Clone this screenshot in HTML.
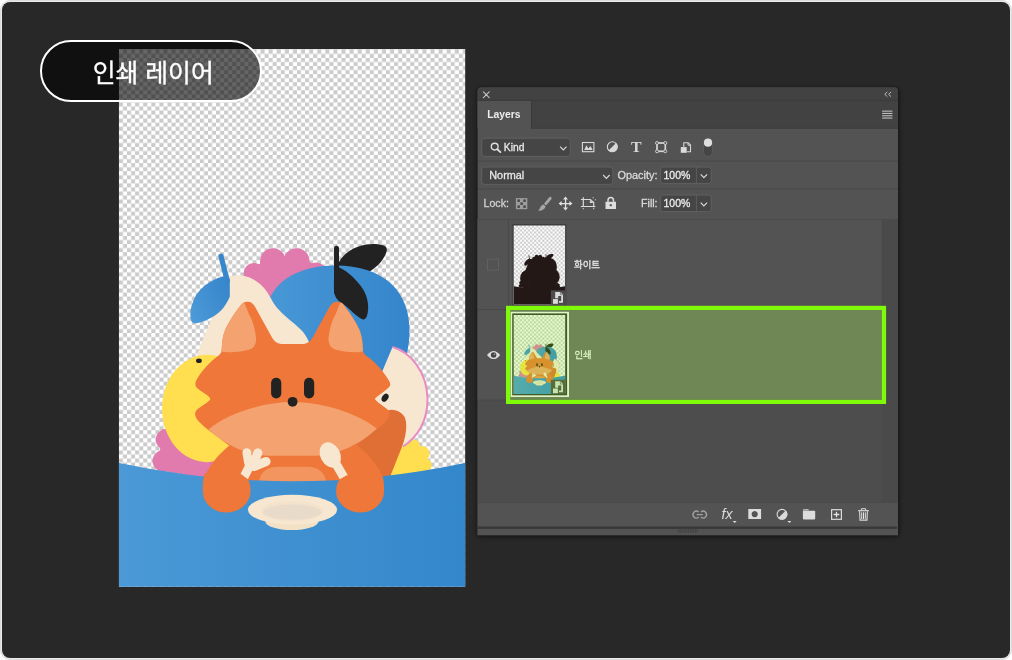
<!DOCTYPE html>
<html lang="ko">
<head>
<meta charset="utf-8">
<title>인쇄 레이어</title>
<style>
*{box-sizing:border-box;margin:0;padding:0}
html,body{width:1012px;height:660px;background:#fff;overflow:hidden}
body{position:relative;font-family:"Liberation Sans","Noto Sans CJK KR",sans-serif;}
#frame{position:absolute;left:0;top:0;width:1012px;height:660px;border-radius:10px;background:#ebebeb;border:1px solid #dcdcdc}
#stage{position:absolute;left:2px;top:2px;width:1008px;height:655.6px;border-radius:8px;background:#282828}
#art{position:absolute;left:118px;top:48px;width:348px;height:540px}
#pill{position:absolute;left:40px;top:40px;width:221.5px;height:61.5px;border-radius:31px;border:2px solid #fff;background:rgba(0,0,0,.6);color:#fff;font-size:24.8px;font-weight:400;-webkit-text-stroke:0.35px #fff;line-height:64px;text-align:center;padding-left:5px;will-change:transform;font-family:"Liberation Sans","Noto Sans CJK KR",sans-serif}
#panel{position:absolute;left:470px;top:80px;width:440px;height:465px;will-change:transform}
</style>
</head>
<body>
<div id="frame"></div>
<div id="stage"></div>
<!--ART-->
<svg id="art" viewBox="118 48 348 540">
<defs>
<linearGradient id="gb" gradientUnits="userSpaceOnUse" x1="119" y1="0" x2="465" y2="0"><stop offset="0" stop-color="#4b99d6"/><stop offset="1" stop-color="#3387cb"/></linearGradient>
<linearGradient id="gp" gradientUnits="userSpaceOnUse" x1="270" y1="0" x2="410" y2="0"><stop offset="0" stop-color="#4897d5"/><stop offset="1" stop-color="#3485cc"/></linearGradient>
<linearGradient id="gl" gradientUnits="userSpaceOnUse" x1="190" y1="310" x2="230" y2="290"><stop offset="0" stop-color="#4b99d6"/><stop offset="1" stop-color="#3886cc"/></linearGradient>
<pattern id="cv" x="118.95" y="41.758" width="8.092" height="8.092" patternUnits="userSpaceOnUse"><rect width="8.092" height="8.092" fill="#fff"/><rect x="4.046" width="4.046" height="4.046" fill="#cbcbcb"/><rect y="4.046" width="4.046" height="4.046" fill="#cbcbcb"/></pattern>
<pattern id="cv2" x="118.95" y="49.15" width="8.092" height="8.092" patternUnits="userSpaceOnUse"><rect width="8.092" height="8.092" fill="#fff"/><rect x="4.046" width="4.046" height="4.046" fill="#cbcbcb"/><rect y="4.046" width="4.046" height="4.046" fill="#cbcbcb"/></pattern>
<clipPath id="cvc"><rect x="118.95" y="49.15" width="346.23" height="537.65"/></clipPath>
<g id="artg">
<!-- pink cloud top -->
<g fill="#e17aad">
<circle cx="254" cy="273.5" r="10.5"/><circle cx="272.9" cy="261.2" r="12.9"/><circle cx="296.6" cy="261.3" r="13"/><circle cx="316" cy="273" r="10.5"/>
<path d="M245 277 L262 262 L284.7 256.5 L310 262 L326 275 L300 310 L265 310Z"/>
</g>
<!-- upper black leaf -->
<path fill="#222" d="M338 264 C344 251 359 243.5 375 244 C384 244.3 388.5 246.5 386.3 252.5 C383 261 376 268.5 366 273.5 L338 272Z"/>
<!-- plum -->
<path fill="url(#gp)" d="M266 335 C258 283 298 265.5 335 265.5 C385 265.5 409.5 292 409.5 330 C409.5 345 407 358 400 372 L300 380 L266 380Z"/>
<!-- pear -->
<path fill="#f7e6d0" d="M227 279 C232 274 243 274 252.7 279 C262 284 267 291 271 298.6 C277 311 288 318 298 327 C304 332 308 338 310 346 L310 380 L195 380 L197.5 353.7 C199.5 347 205.5 333 210.5 321.5 L227 292Z"/>
<!-- pear leaf -->
<path stroke="#3886cc" stroke-width="5.2" stroke-linecap="round" fill="none" d="M221 256.2 L227.3 281"/>
<path fill="url(#gl)" d="M223.2 276.6 C219 277.5 216 278.8 214.2 279.8 C209 282.5 204.5 285.5 201.3 288.8 C197.5 292.5 194.8 297 193 301.7 C191 306.5 190.2 311 190.4 314.6 C190.5 318 190.6 320 191.7 321.4 C193 323.2 195 323.5 197.5 323 C203 322 209 319 214.2 315.9 C219 313 223 309 225.8 304.3 C228 300.5 229.5 298 229.8 296.5 L229.8 279 L227 276.5Z"/>
<!-- black stem and lower leaf -->
<path stroke="#222" stroke-width="5" stroke-linecap="round" fill="none" d="M336.5 248.3 L336.5 292"/>
<path fill="#222" d="M339.3 267.5 C348 271.3 358 281 363.5 290 C368 298 368.9 306 367.7 313 C366.8 318 365 320.2 362.5 319.3 C358 317.5 352 311.5 347 307 C343 303.5 338.5 301.8 336 297.8 C334 294.5 333.9 290 333.9 285 L334.2 267Z"/>
<!-- pink cloud bottom left -->
<g fill="#e17aad"><circle cx="166.5" cy="439.5" r="10.7"/><circle cx="163.2" cy="461" r="10.7"/><path d="M162 430 L215 430 L215 480 L158 470Z"/></g>
<!-- yellow cloud bottom right -->
<g fill="#ffde50"><circle cx="413.6" cy="445.9" r="6.5"/><circle cx="421.8" cy="453.7" r="7.7"/><circle cx="424.9" cy="465.2" r="6.8"/><path d="M385 445 L407 443.5 L413.6 446 L421.8 453.7 L424.9 465.2 L427 480 L380 480Z"/></g>
<!-- cream bird right -->
<path fill="#f7e6d0" d="M392.5 347 C411 352 426.5 372 427.5 398 C428 420 418 437 403 446.5 L378 450 L372 399 L382 372Z"/>
<path fill="none" stroke="#e88cc4" stroke-width="2" d="M392.5 347 C411 352 426.5 372 427.5 398 C428 420 418 437 403 446.5"/>
<ellipse cx="385.1" cy="397.7" rx="3" ry="4.5" transform="rotate(32 385.1 397.7)" fill="#222"/>
<!-- yellow chick -->
<ellipse cx="207" cy="408.5" rx="45" ry="53.7" fill="#ffde50"/>
<ellipse cx="198.9" cy="360.8" rx="2.9" ry="2.3" fill="#222"/>
<!-- tail -->
<path fill="#df6f35" d="M385 412 C390 408 399 409.5 404 416 C408 422 406.5 436 401.5 448 L390 477 L345 477 L355 440Z"/>
<!-- fox body -->
<path fill="#ee7739" d="M229.4 445.5 C217.5 455 207.5 467.5 203.2 481 L202.6 495 L384.2 495 L383.6 480 C380.6 468.5 370.9 456.4 356.4 444.2 L330 436 L250 436Z"/>
<!-- fox head -->
<path id="head" fill="#ee7739" d="M292.3 343.9 L281.5 343.9 Q275.5 343.9 272 337.4 L254.6 305.9 Q251.5 301.2 247 301.7 Q243 302 240.5 305.5 Q230 319 225.2 329.8 Q222 337.5 221.6 350.5 Q221.3 353.8 217 356.8 C209 362.5 201 372 196.8 379.5 C194.3 384 195.2 386.5 198.3 389.1 C201.5 391.5 206.5 394.5 208.8 396.8 C210.6 398.6 210.6 399.2 208.8 400.9 C206 403.5 201.5 406 198.3 408.5 C194.8 411.5 194.2 414 196.2 418 C198.5 422 203 425.5 208 429.7 L228.7 445.2 L292.3 460 L355.9 445.2 L376.6 429.7 C381.6 425.5 386.1 422 388.4 418 C390.4 414 389.8 411.5 386.3 408.5 C383.5 406.3 379 403.3 376.3 400.8 C374.7 399.3 374.7 398.5 376.3 397.3 C380 394.4 384.8 391 388.2 388 C390.8 385.6 390.8 383.6 388.8 380.4 C384.2 372.6 376 362.5 367.6 356.8 Q363.3 353.8 363 350.5 Q362.6 337.5 359.4 329.8 Q354.6 319 344.1 305.5 Q341.6 302 337.6 301.7 Q333.1 301.2 330 305.9 L312.6 337.4 Q309.1 343.9 303.1 343.9 L292.3 343.9 Z"/>
<!-- inner ears -->
<path fill="#f4a270" d="M244.2 302.6 Q242 302.8 240.5 305.5 Q230 319 225.2 329.8 Q222 337.5 221.6 350.5 Q221.5 351.5 222.5 351.7 Q237 353.5 249 349.8 Q256.5 347 256.2 338.5 Q254 322 249.1 314.6 Q246.5 308 244.2 302.6Z"/>
<path fill="#f4a270" d="M340.4 302.6 Q342.6 302.8 344.1 305.5 Q354.6 319 359.4 329.8 Q362.6 337.5 363 350.5 Q363.1 351.5 362.1 351.7 Q347.6 353.5 335.6 349.8 Q328.1 347 328.4 338.5 Q330.6 322 335.5 314.6 Q338.1 308 340.4 302.6Z"/>
<!-- muzzle -->
<path fill="#f4a270" d="M208.5 429.4 C226 414 262 402 292.3 402 C323 402 359 414 376.8 428.6 C361 444 336 455.8 316 455.8 L268 455.8 C249 455.8 225 445 208.5 429.4Z"/>
<!-- belly -->
<path fill="#f2955f" d="M258.5 484 C259.5 472 267 466.7 278 466.7 L307 466.7 C318 466.7 325.5 472 326.5 484Z"/>
<!-- face -->
<rect x="271.1" y="377.7" width="10.2" height="20.7" rx="5.1" fill="#222"/>
<rect x="304" y="377.7" width="10.2" height="20.7" rx="5.1" fill="#222"/>
<circle cx="292.6" cy="401.8" r="4.9" fill="#222"/>
<!-- fork -->
<g stroke="#f7e6d0" stroke-linecap="round" fill="none">
<path stroke-width="8.8" d="M248.6 463 L246.8 452.7"/>
<path stroke-width="9" d="M253 464.5 L257.9 452.8"/>
<path stroke-width="9.2" d="M254 466.6 L266 461.6"/>
<path stroke-width="9" stroke-linecap="butt" d="M251.3 462.5 L242 481"/>
</g>
<!-- spoon -->
<ellipse cx="330.3" cy="455" rx="10" ry="13.2" transform="rotate(-27 330.3 455)" fill="#f7e6d0"/>
<path stroke="#f7e6d0" stroke-width="9" fill="none" d="M335 462 L346 481"/>
<!-- table -->
<path fill="url(#gb)" d="M118 462.7 Q292 499.8 466 462.7 L466 588 L118 588Z"/>
<!-- paws -->
<path fill="#ee7739" d="M248.2 479.4 L240.9 473.9 L204.5 473.5 C202.4 481 202.3 492 203.6 497 C206.5 506 215.5 512.6 226.6 512.6 C237.6 512.6 247 505.5 249.8 496.5 C251 491.5 250.9 484.5 248.2 479.4Z"/>
<path fill="#ee7739" d="M339.4 479.4 L346.7 475.2 L382 474 C384.4 481 384.6 492 383.2 497 C380.3 506 371.2 512.6 360.1 512.6 C349.1 512.6 339.7 505.5 336.8 496.5 C335.5 491.5 335.9 484.5 339.4 479.4Z"/>
<!-- plate -->
<ellipse cx="291.9" cy="521.5" rx="26.5" ry="8.6" fill="#f3e1c6"/>
<ellipse cx="292.5" cy="509.7" rx="44.6" ry="14.9" fill="#f7e6d0"/>
<ellipse cx="292.1" cy="511.1" rx="31" ry="10.1" fill="#f3e2cc"/>
<ellipse cx="292.4" cy="512.1" rx="29" ry="7.6" fill="#e9dbc9"/>
</g>
</defs>
<rect x="118.95" y="49.15" width="346.23" height="537.65" fill="url(#cv)"/>
<rect x="118.95" y="49.15" width="346.23" height="0.75" fill="url(#cv2)"/>
<g clip-path="url(#cvc)"><use href="#artg"/></g>
</svg>
<!--/ART-->
<div id="pill">인쇄 레이어</div>
<!--PANEL-->
<svg id="panel" viewBox="470 80 440 465" font-family="'Liberation Sans','Noto Sans CJK KR',sans-serif">
<defs>
<filter id="psh" x="-5%" y="-5%" width="110%" height="110%"><feGaussianBlur stdDeviation="2.2"/></filter>
<filter id="sil" color-interpolation-filters="sRGB"><feColorMatrix type="matrix" values="0 0 0 0 0.137  0 0 0 0 0.094  0 0 0 0 0.082  0 0 0 1 0"/></filter>
<pattern id="chk" x="513.75" y="225.4" width="4.08" height="4.08" patternUnits="userSpaceOnUse"><rect width="4.08" height="4.08" fill="#fff"/><rect width="2.04" height="2.04" x="2.04" fill="#cbcbcb"/><rect width="2.04" height="2.04" y="2.04" fill="#cbcbcb"/></pattern>
<clipPath id="pc"><path d="M477.6 91.5 a4 4 0 0 1 4 -4 h412.4 a4 4 0 0 1 4 4 V535.3 H477.6Z"/></clipPath>
<clipPath id="t1"><rect x="513.7" y="225.5" width="51.4" height="78.8"/></clipPath>
<clipPath id="t2"><rect x="513.7" y="315" width="51.5" height="78.9"/></clipPath>
<g id="so">
<rect x="0" y="0" width="14.4" height="14.5" fill="#4c4c4c"/>
<path fill="#dcdcdc" d="M4.3 1.5 H9.5 L12.1 4.2 V12.4 H8.1 V10.6 H10.3 V5.7 H7.3 V7.9 H4.3Z"/>
<path fill="none" stroke="#4c4c4c" stroke-width="0.6" d="M9.5 1.6 V4.3 H12"/>
<rect x="2.1" y="8.7" width="4.9" height="4.7" fill="#dcdcdc"/>
</g>
</defs>
<!-- shadow -->
<rect x="477" y="88" width="422" height="449" rx="4" fill="#000" opacity=".55" filter="url(#psh)"/>
<g clip-path="url(#pc)">
<rect x="477" y="87" width="421" height="449" fill="#535353"/>
<!-- title bar + tab bar -->
<rect x="477" y="87" width="421" height="41.5" fill="#424242"/>

<rect x="477" y="100.7" width="54.1" height="28.3" fill="#535353"/>
<rect x="477" y="99.7" width="421" height="1" fill="#3a3a3a"/>
<rect x="531" y="100.7" width="0.9" height="27.9" fill="#393939"/>
<rect x="531.1" y="127.8" width="367" height="0.9" fill="#3c3c3c"/>
<!-- row separators -->
<rect x="478" y="160.6" width="420" height="1" fill="#484848"/>
<rect x="478" y="188.4" width="420" height="1" fill="#484848"/>
<!-- list area -->
<rect x="477" y="219" width="420" height="283.5" fill="#4d4d4d"/>
<rect x="477" y="219" width="404.4" height="181" fill="#535353"/>
<rect x="478" y="219" width="420" height="0.8" fill="#4a4a4a"/>
<rect x="882.4" y="219.4" width="15.6" height="283.1" fill="#4a4a4a"/>
<rect x="507.9" y="219.6" width="0.9" height="180.4" fill="#474747"/>
<rect x="478" y="309.2" width="404.4" height="0.9" fill="#474747"/>
<rect x="478" y="399.6" width="404.4" height="0.8" fill="#474747"/>
<!-- bottom toolbar -->
<rect x="477" y="502.5" width="420" height="33" fill="#535353"/>
<rect x="478" y="502.2" width="420" height="0.8" fill="#484848"/>
<rect x="477" y="526.5" width="420" height="2.4" fill="#383838"/>
</g>
<!--P2-->
<!-- title icons -->
<g stroke="#d2d2d2" stroke-width="1.15" fill="none" stroke-linecap="round">
<path d="M483.4 91.8 L489.2 97.6 M489.2 91.8 L483.4 97.6" stroke="#c4c4c4" stroke-width="1.05"/>
<path d="M887 92.2 L884.8 94.3 L887 96.4 M890.8 92.2 L888.6 94.3 L890.8 96.4" stroke-width="1" stroke="#bcbcbc"/>
</g>
<g fill="#bdbdbd"><rect x="882.1" y="110.6" width="10.3" height="1.1"/><rect x="882.1" y="112.9" width="10.3" height="1.1"/><rect x="882.1" y="115.2" width="10.3" height="1.1"/><rect x="882.1" y="117.5" width="10.3" height="1.1"/></g>
<text x="487.2" y="118.1" font-size="11.3" font-weight="700" fill="#ededed" textLength="33.4" lengthAdjust="spacingAndGlyphs">Layers</text>
<!-- filter row -->
<rect x="481.7" y="138.2" width="88.6" height="18.2" rx="3" fill="#454545" stroke="#606060" stroke-width="1"/>
<g stroke="#dedede" fill="none"><circle cx="494.7" cy="146.6" r="3.4" stroke-width="1.35"/><path d="M497.3 149.3 L500.4 152.1" stroke-width="1.9" stroke-linecap="round"/></g>
<text stroke="#e9e9e9" stroke-width="0.28" x="503.8" y="150.9" font-size="10.7" fill="#e9e9e9" textLength="20.6" lengthAdjust="spacingAndGlyphs">Kind</text>
<path d="M560.1 146.6 L563.3 149.9 L566.5 146.6" stroke="#d8d8d8" stroke-width="1.2" fill="none"/>
<!-- image icon -->
<rect x="582.4" y="142.5" width="11.5" height="9.2" fill="none" stroke="#d9d9d9" stroke-width="1.1"/>
<path d="M584.2 149.9 L586.4 145.3 L588.3 148.6 L590.5 146 L592.7 149.9Z" fill="#d9d9d9"/>
<!-- half circle -->
<circle cx="612.3" cy="146.8" r="5" fill="none" stroke="#d9d9d9" stroke-width="1.1"/>
<path d="M616.1 143 A5.4 5.4 0 0 1 608.5 150.6Z" fill="#d9d9d9"/>
<!-- T -->
<text x="631.1" y="152.2" font-family="'Liberation Serif',serif" font-weight="700" font-size="14.9" fill="#d8d8d8" textLength="10.6" lengthAdjust="spacingAndGlyphs">T</text>
<!-- shape -->
<g fill="none" stroke="#d6d6d6"><rect x="657" y="143" width="8.3" height="8.3" stroke-width="1.7"/><g stroke-width="0.9" fill="#535353"><circle cx="657" cy="143" r="1.5"/><circle cx="665.3" cy="143" r="1.5"/><circle cx="657" cy="151.3" r="1.5"/><circle cx="665.3" cy="151.3" r="1.5"/></g></g>
<!-- smart object filter -->
<path d="M683.8 147 V142.7 H688.3 L690.5 145 V151.8 H687" fill="none" stroke="#d6d6d6" stroke-width="1.1"/>
<path d="M688 142.7 V145.3 H690.5" fill="none" stroke="#d6d6d6" stroke-width="0.9"/>
<rect x="680.8" y="147.1" width="5.9" height="5.7" fill="#dcdcdc"/>
<!-- toggle -->
<rect x="703.6" y="138.6" width="8.8" height="17.8" rx="4.4" fill="#454545" stroke="#5e5e5e" stroke-width="0.8"/>
<circle cx="708" cy="142.7" r="4.1" fill="#dedede"/>
<!-- blend row -->
<rect x="481.7" y="167" width="131.2" height="17.4" rx="3" fill="#454545" stroke="#606060" stroke-width="1"/>
<text stroke="#e9e9e9" stroke-width="0.28" x="489.3" y="179" font-size="10.4" fill="#e9e9e9" textLength="34.9" lengthAdjust="spacingAndGlyphs">Normal</text>
<path d="M603.2 175 L606.4 178.3 L609.6 175" stroke="#d8d8d8" stroke-width="1.2" fill="none"/>
<text stroke="#dadada" stroke-width="0.28" x="617.5" y="179" font-size="10.4" fill="#dadada" textLength="40" lengthAdjust="spacingAndGlyphs">Opacity:</text>
<rect x="660.6" y="167" width="50.6" height="16.4" rx="2.5" fill="#454545" stroke="#606060" stroke-width="1"/>
<rect x="695.9" y="167" width="0.9" height="16.4" fill="#606060"/>
<text stroke="#ededed" stroke-width="0.28" x="663.5" y="179" font-size="10.4" fill="#ededed" textLength="26.8" lengthAdjust="spacingAndGlyphs">100%</text>
<path d="M700.7 174.4 L703.9 177.7 L707.1 174.4" stroke="#d8d8d8" stroke-width="1.2" fill="none"/>
<!-- lock row -->
<text stroke="#d2d2d2" stroke-width="0.28" x="483.5" y="207.4" font-size="10.4" fill="#d2d2d2" textLength="25.4" lengthAdjust="spacingAndGlyphs">Lock:</text>
<g><rect x="515.9" y="198.1" width="11.4" height="11.1" fill="#9d9d9d"/><g fill="#474747"><rect x="517.4" y="199.4" width="2.5" height="2.5"/><rect x="523.3" y="199.4" width="2.5" height="2.5"/><rect x="520.4" y="202.4" width="2.5" height="2.5"/><rect x="517.4" y="205.4" width="2.5" height="2.5"/><rect x="523.3" y="205.4" width="2.5" height="2.5"/></g></g>
<path d="M550.9 197 C551.9 197.6 551.8 198.6 551.2 199.5 L546 205.4 L544 203.8 L549 197.5 C549.6 196.8 550.3 196.7 550.9 197Z M543.4 204.4 L545.5 206.2 C545.3 208.6 542.5 210.9 538.1 210.7 C540.1 209.3 539.8 205.6 543.4 204.4Z" fill="#a6a6a6"/>
<g fill="#e2e2e2"><rect x="564.9" y="198" width="1.3" height="11.2"/><rect x="559.9" y="203" width="11.2" height="1.3"/><path d="M565.5 196.6 L568 199.6 H563Z M565.5 210.6 L568 207.6 H563Z M558.6 203.6 L561.6 201.1 V206.1Z M572.4 203.6 L569.4 201.1 V206.1Z"/></g>
<g fill="none" stroke="#dadada" stroke-width="1.2"><path d="M583.3 197.2 V206.5 M580.9 206.5 H595.4 M580.9 199.5 H590.4 L593.7 202.6 V207.2"/></g>
<path d="M589.9 199.9 V203.1 H593.4Z" fill="#dadada"/>
<g fill="#c4c4c4"><rect x="582.8" y="208" width="1.1" height="1.3"/><rect x="593.1" y="208" width="1.1" height="1.3"/><rect x="592.6" y="197.2" width="1.1" height="1.1"/><rect x="594.8" y="199.2" width="1.1" height="1.1"/></g>
<path d="M608 201.8 V200.4 A2.75 2.9 0 0 1 613.5 200.4 V201.8" fill="none" stroke="#dedede" stroke-width="1.5"/>
<path d="M605.5 201.7 H616 V208.9 H605.5Z M610.75 203.9 a1.2 1.2 0 1 0 0.01 0Z" fill="#dedede" fill-rule="evenodd"/>
<text stroke="#dadada" stroke-width="0.28" x="641" y="207.4" font-size="10.4" fill="#dadada" textLength="16.6" lengthAdjust="spacingAndGlyphs">Fill:</text>
<rect x="660.6" y="195" width="50.6" height="16.6" rx="2.5" fill="#454545" stroke="#606060" stroke-width="1"/>
<rect x="695.9" y="195" width="0.9" height="16.6" fill="#606060"/>
<text stroke="#ededed" stroke-width="0.28" x="663.5" y="207.4" font-size="10.4" fill="#ededed" textLength="26.8" lengthAdjust="spacingAndGlyphs">100%</text>
<path d="M700.7 202.6 L703.9 205.9 L707.1 202.6" stroke="#d8d8d8" stroke-width="1.2" fill="none"/>
<!--/P2-->
<!--P3-->
<!-- layer 1 -->
<rect x="487.6" y="259.2" width="11" height="11" fill="none" stroke="#626262" stroke-width="1"/>
<rect x="512.5" y="224.2" width="53.8" height="81" fill="#3b3b3b"/>
<rect x="513.7" y="225.5" width="51.4" height="78.8" fill="url(#chk)"/>
<g clip-path="url(#t1)"><g transform="translate(496.1 218.3) scale(0.1483 0.1466)" filter="url(#sil)"><use href="#artg"/></g></g>
<use href="#so" x="550.9" y="290.4"/>
<text stroke="#e6e6e6" stroke-width="0.28" x="574" y="268.4" font-size="9.6" fill="#e6e6e6" textLength="26" lengthAdjust="spacingAndGlyphs">화이트</text>
<!-- layer 2 -->
<rect x="508.8" y="310.1" width="373.6" height="89.5" fill="#6b6b6b"/>
<rect x="510.6" y="311.8" width="58.4" height="85.2" fill="#f4f4f4"/>
<rect x="512.2" y="313.4" width="54.9" height="81.9" fill="#333"/>
<rect x="513.7" y="315" width="51.5" height="78.9" fill="url(#chk)"/>
<g clip-path="url(#t2)"><g transform="translate(496.1 307.8) scale(0.1483 0.1466)"><use href="#artg"/></g></g>
<use href="#so" x="550.9" y="379.8"/>
<text stroke="#f2f2f2" stroke-width="0.28" x="574.4" y="358.2" font-size="9.6" fill="#f2f2f2" textLength="17.2" lengthAdjust="spacingAndGlyphs">인쇄</text>
<!-- eye -->
<path d="M487 355 C489.5 352 491.6 350.9 493.6 350.9 C495.6 350.9 497.7 352 500.2 355 C497.7 358 495.6 359.1 493.6 359.1 C491.6 359.1 489.5 358 487 355Z" fill="#dcdcdc"/>
<circle cx="493.6" cy="354.9" r="2.75" fill="#454545"/><circle cx="494.5" cy="354.2" r="0.7" fill="#b5b5b5"/>
<!-- highlight -->
<rect x="508.1" y="307.9" width="375.9" height="94" fill="#7cfc00" fill-opacity=".2" stroke="#7ffb09" stroke-width="4.2"/>
<!-- bottom toolbar -->
<g fill="none" stroke="#a2a2a2" stroke-width="1.3"><path d="M698.6 512 A3.4 3.4 0 1 0 698.6 517.2 M700.9 512 A3.4 3.4 0 1 1 700.9 517.2 M696.7 514.6 H702.8"/></g>
<text x="721.6" y="519.4" font-size="14.5" font-style="italic" fill="#dcdcdc" textLength="11" lengthAdjust="spacingAndGlyphs">fx</text>
<path d="M732.7 521 H736.7 L734.7 523.1Z" fill="#e0e0e0"/>
<path d="M748.3 508.9 H761.1 V518.9 H748.3Z M754.7 511 a3.1 3.1 0 1 0 0.01 0Z" fill="#dcdcdc" fill-rule="evenodd"/>
<circle cx="782" cy="514.3" r="4.9" fill="none" stroke="#d9d9d9" stroke-width="1.1"/>
<path d="M785.8 510.5 A5.3 5.3 0 0 1 778.2 518.1Z" fill="#d9d9d9"/>
<path d="M787.4 521 H791.4 L789.4 523.1Z" fill="#e0e0e0"/>
<path d="M803 510.6 V509.5 a0.5 0.5 0 0 1 0.5 -0.5 H808.2 a0.5 0.5 0 0 1 0.5 0.5 V510.6Z" fill="#b4b4b4"/><path d="M802.9 510.7 H814.4 a0.8 0.8 0 0 1 0.8 0.8 V518.6 a0.8 0.8 0 0 1 -0.8 0.8 H803.7 a0.8 0.8 0 0 1 -0.8 -0.8Z" fill="#dcdcdc"/>
<rect x="831.6" y="509.7" width="9.8" height="9.6" fill="none" stroke="#dcdcdc" stroke-width="1.2"/>
<path d="M836.5 511.7 V517.3 M833.7 514.5 H839.3" stroke="#e4e4e4" stroke-width="1.3" fill="none"/>
<g fill="none" stroke="#dadada"><path d="M858.1 510.7 H868.9" stroke-width="1.2"/><path d="M861.4 510.2 V508.7 H865.6 V510.2" stroke-width="1"/><path d="M859.6 511.2 L860 520.1 H867 L867.4 511.2" stroke-width="1.1"/><path d="M861.7 512.3 V519 M863.5 512.3 V519 M865.3 512.3 V519" stroke-width="1" stroke="#e4e4e4"/></g>
<!-- grip -->
<g fill="#404040"><rect x="678" y="529.2" width="0.8" height="3.6"/><rect x="679.7" y="529.2" width="0.8" height="3.6"/><rect x="681.4" y="529.2" width="0.8" height="3.6"/><rect x="683.1" y="529.2" width="0.8" height="3.6"/><rect x="684.8" y="529.2" width="0.8" height="3.6"/><rect x="686.5" y="529.2" width="0.8" height="3.6"/><rect x="688.2" y="529.2" width="0.8" height="3.6"/><rect x="689.9" y="529.2" width="0.8" height="3.6"/><rect x="691.6" y="529.2" width="0.8" height="3.6"/><rect x="693.3" y="529.2" width="0.8" height="3.6"/><rect x="695" y="529.2" width="0.8" height="3.6"/><rect x="696.7" y="529.2" width="0.8" height="3.6"/></g>
<!--/P3-->
</svg>
<!--/PANEL-->
</body>
</html>
